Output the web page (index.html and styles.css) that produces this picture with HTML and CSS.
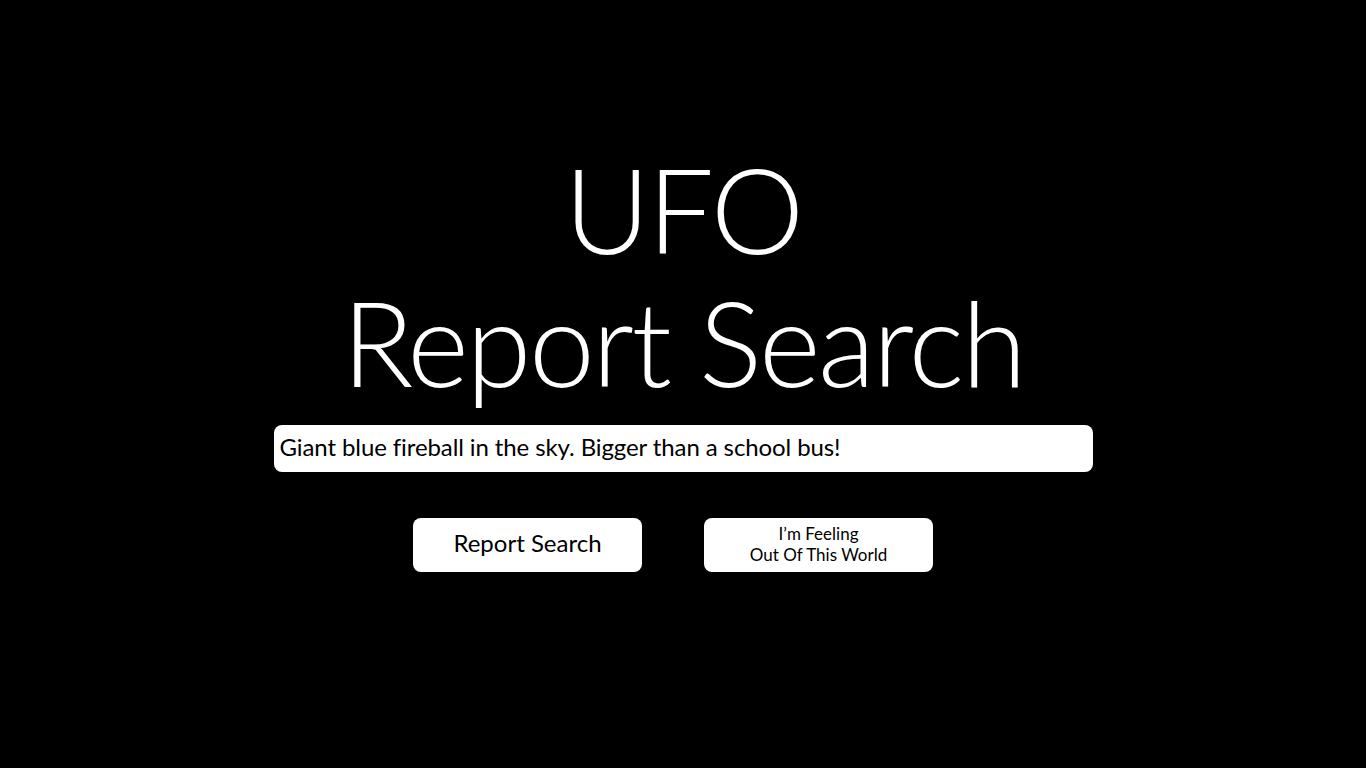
FILE: index.html
```html
<!DOCTYPE html>
<html>
<head>
<meta charset="utf-8">
<link rel="stylesheet" href="styles.css">
</head>
<body>
<main class="page">
  <h1 class="title">UFO<br>Report Search</h1>
  <input class="search" type="text" value="Giant blue fireball in the sky. Bigger than a school bus!">
  <div class="actions">
    <button class="btn btn-main">Report Search</button>
    <button class="btn btn-lucky">I’m Feeling<br>Out Of This World</button>
  </div>
</main>
</body>
</html>
```
FILE: styles.css
```css
html, body {
  margin: 0;
  padding: 0;
  background: #000;
  height: 100%;
}
body {
  font-family: "Lato", "Noto Sans", sans-serif;
  color: #fff;
}
.page {
  display: flex;
  flex-direction: column;
  align-items: center;
  padding-top: 142px;
}
.title {
  margin: 0;
  font-weight: 300;
  font-size: 118px;
  line-height: 133px;
  text-align: center;
  letter-spacing: -2.5px;
}
.search {
  box-sizing: border-box;
  margin-top: 17px;
  width: 819px;
  height: 47px;
  border: none;
  border-radius: 8px;
  background: #fff;
  color: #000;
  font-family: "Lato", "Noto Sans", sans-serif;
  font-size: 24px;
  letter-spacing: -0.1px;
  padding: 0 6px 4px;
  outline: none;
}
.actions {
  display: flex;
  gap: 62px;
  margin-top: 46px;
  margin-right: 20px;
}
.btn {
  width: 229px;
  height: 54px;
  border: none;
  border-radius: 8px;
  background: #fff;
  color: #000;
  font-family: "Lato", "Noto Sans", sans-serif;
  padding: 0;
  cursor: pointer;
}
.btn-main {
  font-size: 24px;
  padding-bottom: 6px;
}
.btn-lucky {
  font-size: 17px;
  line-height: 21px;
  padding-bottom: 2px;
}
```
